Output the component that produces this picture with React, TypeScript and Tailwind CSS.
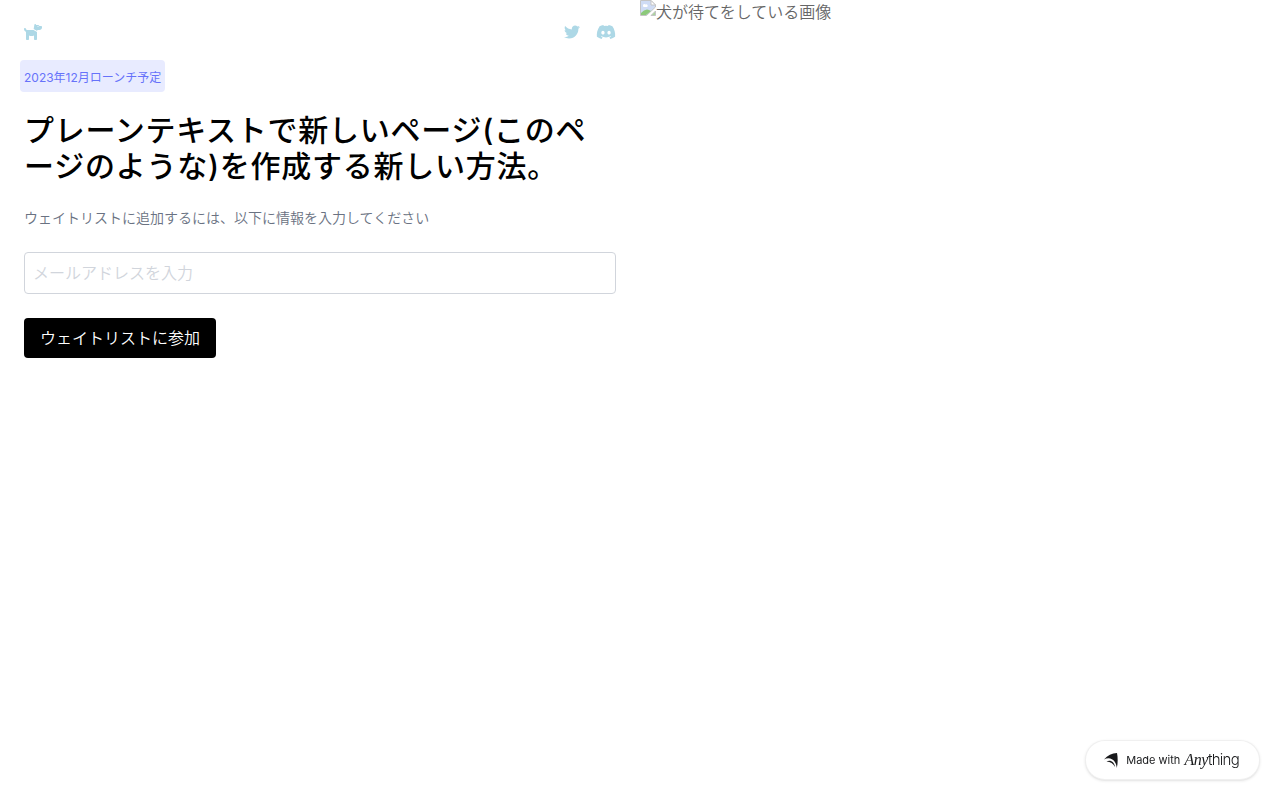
import { FaDiscord, FaDog, FaTwitter } from 'react-icons/fa6'

const BrokenImageIcon = () => (
  <svg width="16" height="16" viewBox="0 0 16 16" className="shrink-0" aria-hidden="true">
    <path d="M0.5 0.5H11L15.5 5V7L6.500 15.5H0.5Z" fill="#cfdcf5" stroke="#c4c4c4" />
    <path d="M11 0.5V5H15.5Z" fill="#fff" stroke="#c4c4c4" />
    <path d="M3 6a1.500 1.500 0 0 1 2.500-1.500A1.300 1.300 0 0 1 7 7H3.500Z" fill="#fff" />
    <path d="M1 15V13Q6 7 11 11L6 15Z" fill="#8cc97a" />
    <path d="M11 15.500L15.500 11V15.500Z" fill="#a9d69b" stroke="#c4c4c4" />
  </svg>
)

const AnythingMark = () => (
  <svg width="14" height="15" viewBox="0 0 14 15" fill="#18191b" aria-hidden="true">
    <path d="M0 6.500C3.500 2.500 8 .2 13 0c.9 4.500 1 10-.2 15C12.400 10 9.500 5.500 4.500 5.300 2.800 5.300 1.300 5.800 0 6.500Z" />
    <path d="M2.500 8.500C7 6.500 10.500 9.500 11 14 9.300 10.800 6.500 8.700 2.500 8.500Z" />
  </svg>
)

const Header = () => {
  return (
    <header className="flex h-4 items-center justify-between text-[#add8e6]">
      <a href="#" aria-label="ホーム">
        <FaDog size={18} />
      </a>
      <nav className="flex items-center gap-4">
        <a href="#" aria-label="Twitter">
          <FaTwitter size={16} />
        </a>
        <a href="#" aria-label="Discord">
          <FaDiscord size={20} />
        </a>
      </nav>
    </header>
  )
}

const WaitlistForm = () => {
  return (
    <form className="flex flex-col items-start gap-6" onSubmit={(e) => e.preventDefault()}>
      <label htmlFor="email" className="text-sm text-gray-500">
        ウェイトリストに追加するには、以下に情報を入力してください
      </label>
      <input
        id="email"
        type="email"
        placeholder="メールアドレスを入力"
        className="w-full rounded border border-gray-300 p-2 placeholder:text-gray-300"
      />
      <button type="submit" className="rounded bg-black px-4 py-2 text-white">
        ウェイトリストに参加
      </button>
    </form>
  )
}

const App = () => {
  return (
    <div
      lang="ja"
      className="grid min-h-screen grid-cols-2 bg-white font-['Inter','Noto_Sans_CJK_JP',sans-serif] font-[350] text-black"
    >
      <main className="p-6">
        <Header />

        {/* Launch date */}
        <div className="-mx-1 mt-5 flex">
          <span className="rounded-sm bg-[#e8ebff] px-1 pt-2.5 pb-1.5 text-xs font-normal text-[#6672fa]">
            2023年12月ローンチ予定
          </span>
        </div>

        <h1 className="mt-5 mb-6 text-3xl font-medium tracking-wide">
          プレーンテキストで新しいページ(このページのような)を作成する新しい方法。
        </h1>

        <WaitlistForm />
      </main>

      {/* Image that has not loaded */}
      <div role="img" aria-label="犬が待てをしている画像" className="flex items-start text-[#666]">
        <BrokenImageIcon />
        <span>犬が待てをしている画像</span>
      </div>

      <a
        href="#"
        className="fixed right-5 bottom-5 flex h-10 items-center rounded-full border border-black/6 bg-white pr-5 pl-[18px] text-[#18191b] shadow-sm"
      >
        <AnythingMark />
        <span className="ml-2 text-[11px] font-normal">Made with</span>
        <span className="ml-1 flex items-baseline">
          <span className="font-['Liberation_Serif',serif] text-base tracking-tight italic">Any</span>
          <span className="text-[15px] font-light tracking-tighter">thing</span>
        </span>
      </a>
    </div>
  )
}

export default App
